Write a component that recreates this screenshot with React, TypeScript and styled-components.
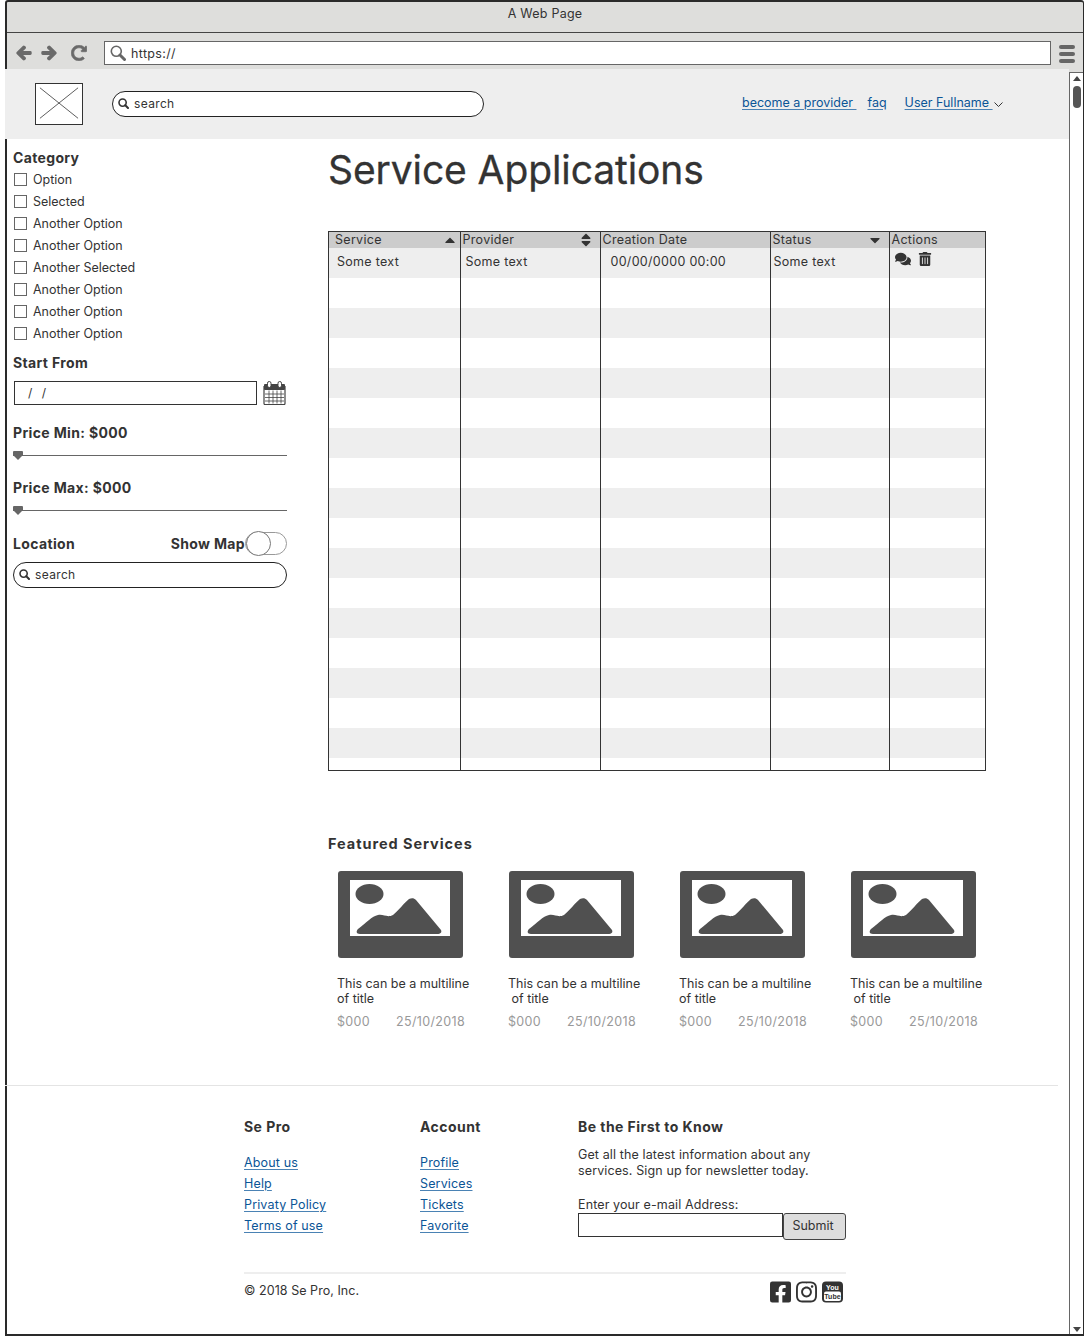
import React from "react";
import styled, { createGlobalStyle } from "styled-components";
import { FaArrowLeft, FaArrowRight, FaRedoAlt, FaComments, FaTrashAlt, FaFacebookSquare, FaInstagram, FaCaretUp, FaCaretDown, FaSort } from "react-icons/fa";

const Global = createGlobalStyle`
  html, body { margin: 0; padding: 0; background: #fff; }
  body { font-family: Inter, "Liberation Sans", sans-serif; font-size: 13px; color: #333; }
  * { box-sizing: border-box; }
`;

const Page = styled.div`
  width: 1085px; height: 1336px; padding-left: 5px; overflow: hidden;
`;
const Window = styled.div`
  width: 1079px; height: 1336px; border: 2px solid #2a2a2a; border-right-width: 1px; border-radius: 3px 3px 0 0;
  background: #dededc; display: flex; flex-direction: column;
`;
const TitleBar = styled.div`
  height: 31px; flex: none; border-bottom: 1.5px solid #444; display: flex; align-items: flex-start; justify-content: center;
  padding-top: 4px; font-size: 12.5px; letter-spacing: 0.25px; color: #333;
`;
const Toolbar = styled.div`
  height: 36px; flex: none; display: flex; align-items: flex-start; padding: 8px 0 0 9px; color: #666;
`;
const NavIcons = styled.div`
  display: flex; gap: 9px; width: 88px; padding-top: 4px; color: #6a6a6a;
  svg { width: 16px; height: 16px; stroke: currentColor; stroke-width: 45px; }
  svg:last-child { margin-left: 5px; stroke-width: 20px; }
`;
const UrlBar = styled.div`
  width: 947px; height: 24px; background: #fff; border: 1px solid #666; display: flex; align-items: center; gap: 5px; padding-left: 5px;
  font-size: 12.5px; color: #333; letter-spacing: 0.35px;
`;
const Burger = styled.div`
  margin: 4px 0 0 8px; width: 16px; display: flex; flex-direction: column; gap: 3px;
  i { display: block; height: 4px; border-radius: 2px; background: #666; }
`;
const Body = styled.div`
  flex: 1; display: flex; min-height: 0;
`;
const Content = styled.div`
  width: 1064px; margin-left: -2px; flex: none; display: flex; flex-direction: column; overflow: hidden;
`;
const Viewport = styled.div`
  flex: 1; background: #fff; display: flex; flex-direction: column; margin-left: 2px; width: 1062px; position: relative;
`;
const Header = styled.header`
  height: 70px; flex: none; background: #eeeeee; display: flex; align-items: flex-start; padding: 14px 0 0 30px; width: 1064px;
`;
const Logo = styled.svg`
  width: 48px; height: 42px; flex: none; background: #fff; border: 1px solid #333; display: block;
`;
const SearchBox = styled.div<{ $w: number }>`
  width: ${(p) => p.$w}px; height: 26px; background: #fff; border: 1.5px solid #222; border-radius: 13px; display: flex; align-items: center; gap: 5px;
  padding-left: 5px; padding-bottom: 1px; font-size: 12px; letter-spacing: 0.35px; color: #333;
`;
const HeaderSearch = styled.div`
  margin: 8px 0 0 29px;
`;
const TopNav = styled.nav`
  margin: 12px 0 0 258px; display: flex; align-items: center; font-size: 12.5px; letter-spacing: 0; white-space: nowrap;
`;
const A = styled.a`
  color: #0b5596; text-decoration: underline; text-decoration-color: #4a82b4; text-underline-offset: 2px; cursor: pointer; white-space: pre;
`;
const NavGap = styled.span<{ $w: number }>`
  width: ${(p) => p.$w}px; display: inline-block;
`;
const Chevron = styled.svg`
  width: 9px; height: 5px; margin: 3px 0 0 1px; display: block;
`;
const Columns = styled.div`
  display: flex; flex: none; height: 946px;
`;
const Sidebar = styled.aside`
  width: 321px; flex: none; padding: 10px 0 0 6px;
`;
const SideHead = styled.h3<{ $mt?: number }>`
  margin: ${(p) => p.$mt ?? 0}px 0 0; font-size: 14px; line-height: 17px; font-weight: 700; letter-spacing: 0.35px; color: #333;
`;
const Options = styled.ul`
  list-style: none; margin: 2px 0 0; padding: 0; display: flex; flex-direction: column;
`;
const Option = styled.li`
  height: 22px; display: flex; align-items: center; gap: 6px; padding-left: 1px; font-size: 12.5px; letter-spacing: 0; color: #333;
`;
const Box = styled.span`
  width: 13px; height: 13px; background: #fff; border: 1px solid #666; flex: none;
`;
const DateRow = styled.div`
  display: flex; align-items: center; gap: 6px; margin: 10px 0 0 1px; width: 273px;
`;
const DateInput = styled.div`
  width: 243px; height: 24px; border: 1px solid #333; font-size: 12px; padding: 3px 0 0 13px; word-spacing: 6px;
`;
const Slider = styled.div`
  position: relative; width: 274px; height: 1px; background: #666; margin-top: 14px;
`;
const Thumb = styled.svg`
  position: absolute; left: 0; top: -4px; width: 10px; height: 9px;
`;
const LocRow = styled.div`
  display: flex; align-items: center; justify-content: space-between; width: 274px; height: 24px; margin-top: 20px;
`;
const MapSwitch = styled.div`
  display: flex; align-items: center;
`;
const Toggle = styled.span`
  width: 42px; height: 23px; border: 1.5px solid #999; border-radius: 12px; display: block; position: relative; background: #fff;
  &::before { content: ""; position: absolute; left: 0; top: -1.5px; width: 23px; height: 23px; border: 1.5px solid #777; border-radius: 50%; background: #fff; }
`;
const SideSearch = styled.div`
  margin-top: 7px;
`;
const Main = styled.main`
  flex: 1; padding-top: 8px;
`;
const Title = styled.h1`
  margin: 0; font-size: 39px; line-height: 46px; font-weight: 400; letter-spacing: -0.1px; color: #333; height: 84px; -webkit-text-stroke: 0.3px #333;
`;
const TableWrap = styled.div`
  width: 658px; height: 540px; border: 1px solid #333; overflow: hidden; background: #fff;
`;
const Table = styled.table`
  border-collapse: collapse; table-layout: fixed; width: 656px; font-size: 12.5px; letter-spacing: 0.3px; color: #333;
`;
const Th = styled.th<{ $w: number }>`
  width: ${(p) => p.$w}px; height: 16px; padding: 0 0 0 1px; background: #cccccc; border-right: 1px solid #333; font-weight: 400; text-align: left; line-height: 16px;
  &:last-child { border-right: 0; }
`;
const ThInner = styled.div<{ $pl?: number; $pr?: number }>`
  display: flex; justify-content: space-between; align-items: center; padding: 0 ${(p) => p.$pr ?? 9}px 0 ${(p) => p.$pl ?? 1}px;
  svg { font-size: 16px; width: 10px; color: #333; }
`;
const Tr = styled.tr<{ $odd: boolean }>`
  background: ${(p) => (p.$odd ? "#eeeeee" : "#ffffff")};
`;
const Td = styled.td<{ $pl?: number }>`
  height: 30px; padding: 0 0 4px ${(p) => p.$pl ?? 4}px; border-right: 1px solid #333; vertical-align: middle;
  &:last-child { border-right: 0; }
`;
const Actions = styled.div`
  display: flex; gap: 7px; align-items: center; margin-top: -5px; color: #333;
  svg { font-size: 16px; }
  svg:last-child { font-size: 14px; }
`;
const Featured = styled.h3`
  margin: 64px 0 0; font-size: 14.5px; line-height: 18px; font-weight: 700; letter-spacing: 0.95px; color: #333;
`;
const Cards = styled.div`
  display: flex; gap: 46px; margin-top: 18px; padding-left: 10px;
`;
const Card = styled.article`
  width: 125px; flex: none;
`;
const Thumbnail = styled.svg`
  width: 125px; height: 87px; display: block;
`;
const CardTitle = styled.p`
  margin: 18px 0 0 -1px; width: 150px; font-size: 12.5px; line-height: 15px; letter-spacing: 0; color: #333; white-space: pre;
`;
const CardMeta = styled.div`
  margin: 8px 0 0 -1px; width: 128px; display: flex; justify-content: space-between; font-size: 12.5px; line-height: 15px; letter-spacing: 0.35px; color: #999;
`;
const Footer = styled.footer`
  border-top: 1px solid #e4e4e4; height: 250px; width: 1053px; margin-left: -2px; padding: 32px 0 0 239px; position: relative;
`;
const FootCols = styled.div`
  display: flex; height: 154px;
`;
const FootCol = styled.div<{ $w: number }>`
  width: ${(p) => p.$w}px; flex: none;
`;
const FootHead = styled.h4`
  margin: 0; font-size: 14px; line-height: 17px; font-weight: 700; letter-spacing: 0.45px; color: #333;
`;
const FootLinks = styled.div`
  display: flex; flex-direction: column; align-items: flex-start; margin-top: 17px; font-size: 12.5px; line-height: 21px; letter-spacing: 0.15px;
`;
const Blurb = styled.p`
  margin: 12px 0 0; font-size: 12.5px; line-height: 16px; letter-spacing: 0.12px; color: #333; white-space: pre;
`;
const EmailLabel = styled.div`
  margin-top: 18px; font-size: 12.5px; line-height: 16px; letter-spacing: 0.12px; color: #333;
`;
const Form = styled.div`
  display: flex; align-items: flex-start;
`;
const EmailInput = styled.div`
  width: 205px; height: 24px; background: #fff; border: 1px solid #333;
`;
const Submit = styled.button`
  width: 63px; height: 27px; background: #dddddd; border: 1px solid #444; border-radius: 3px; padding: 0 3px 2px 0; font: inherit; font-size: 12.5px; letter-spacing: 0; color: #333;
`;
const Legal = styled.div`
  width: 602px; border-top: 2px solid #eeeeee; height: 38px; display: flex; justify-content: space-between; align-items: flex-start; padding-top: 9px; font-size: 12.5px; letter-spacing: 0.05px; color: #333;
`;
const Social = styled.div`
  display: flex; gap: 5px; padding-right: 3px; margin-top: -3px; color: #333;
  svg { width: 21px; height: 24px; display: block; }
`;
const YouTubeText = styled.text`
  font-family: "Liberation Sans", sans-serif; font-weight: 700; font-size: 7px;
`;
const Scrollbar = styled.div`
  width: 14px; flex: none; margin-top: 3px; background: #fff; border-left: 1.5px solid #666; border-top: 1px solid #666; display: flex; flex-direction: column; align-items: center; justify-content: space-between; padding: 3px 0 2px 0;
`;
const ScrollTop = styled.div`
  display: flex; flex-direction: column; align-items: center;
  i { display: block; width: 8px; height: 22px; border-radius: 4px; background: #555; margin-top: 5px; }
`;
const Arrow = styled.span<{ $down?: boolean }>`
  width: 0; height: 0; border-left: 4px solid transparent; border-right: 4px solid transparent;
  ${(p) => (p.$down ? "border-top: 5px solid #444;" : "border-bottom: 5px solid #444;")}
`;

const options = ["Option", "Selected", "Another Option", "Another Option", "Another Selected", "Another Option", "Another Option", "Another Option"];
const cards = ["This can be a multiline\nof title", "This can be a multiline\n of title", "This can be a multiline\nof title", "This can be a multiline\n of title"];

const UrlSearch = () => (
  <svg width="16" height="16" viewBox="0 0 16 16" fill="none" stroke="#666">
    <circle cx="6.300" cy="6.300" r="5" strokeWidth="1.600" />
    <path d="M10 10l4.500 4.500" strokeWidth="3" strokeLinecap="round" />
  </svg>
);

const SmallSearch = () => (
  <svg width="11" height="11" viewBox="0 0 11 11" fill="none" stroke="#333">
    <circle cx="4.600" cy="4.600" r="3.600" strokeWidth="1.600" />
    <path d="M7.300 7.300l2.700 2.700" strokeWidth="2" strokeLinecap="round" />
  </svg>
);

const Calendar = () => (
  <svg width="23" height="24" viewBox="0 0 23 24" fill="none">
    <path d="M1 5.500h21v17a1 1 0 0 1-1 1H2a1 1 0 0 1-1-1z" fill="#fff" stroke="#444" strokeWidth="1.200" />
    <rect x="1" y="3" width="21" height="6" rx="1" fill="#444" />
    <rect x="4.500" y="0.500" width="3.500" height="6" rx="1.700" fill="#fff" stroke="#444" />
    <rect x="15" y="0.500" width="3.500" height="6" rx="1.700" fill="#fff" stroke="#444" />
    <path d="M2 13h19M2 16.500h19M2 20h19M6 9.500v13M10 9.500v13M14 9.500v13M18 9.500v13" stroke="#444" strokeWidth="0.800" />
  </svg>
);

const Placeholder = () => (
  <Thumbnail viewBox="0 0 125 87">
    <rect width="125" height="87" rx="3" fill="#505050" />
    <rect x="12" y="9" width="100" height="56" fill="#fff" />
    <ellipse cx="31.500" cy="23" rx="14" ry="10" fill="#505050" />
    <path d="M20 58c8-6 14-13 20-14 6-1 9 3 15 0 5-4 12-13 16-16 3-1.500 5-1 7 1l25 30c1 2 0 4-4 4H22c-4 0-4-3-2-5z" fill="#505050" />
  </Thumbnail>
);

const SliderBar = () => (
  <Slider>
    <Thumb viewBox="0 0 10 9"><path d="M1 0h8a1 1 0 0 1 1 1v3L5 9 0 4V1a1 1 0 0 1 1-1z" fill="#666" /></Thumb>
  </Slider>
);

export default function App() {
  const rows = Array.from({ length: 18 });
  return (
    <Page>
      <Global />
      <Window>
        <TitleBar>A Web Page</TitleBar>
        <Toolbar>
          <NavIcons><FaArrowLeft /><FaArrowRight /><FaRedoAlt /></NavIcons>
          <UrlBar><UrlSearch />https://</UrlBar>
          <Burger><i /><i /><i /></Burger>
        </Toolbar>
        <Body>
          <Content>
            <Header>
              <Logo viewBox="0 0 48 42"><path d="M4 4l40 32M44 4L4 36" stroke="#555" strokeWidth="1" /></Logo>
              <HeaderSearch><SearchBox $w={372}><SmallSearch />search</SearchBox></HeaderSearch>
              <TopNav>
                <A>become a provider </A><NavGap $w={11} /><A>faq</A><NavGap $w={18} /><A>User Fullname </A>
                <Chevron viewBox="0 0 9 5"><path d="M0.500 0.500L4.500 4.500L8.500 0.500" fill="none" stroke="#333" strokeWidth="1" /></Chevron>
              </TopNav>
            </Header>
            <Viewport>
              <Columns>
                <Sidebar>
                  <SideHead>Category</SideHead>
                  <Options>{options.map((o, i) => <Option key={i}><Box />{o}</Option>)}</Options>
                  <SideHead $mt={10}>Start From</SideHead>
                  <DateRow><DateInput>/ /</DateInput><Calendar /></DateRow>
                  <SideHead $mt={19}>Price Min: $000</SideHead>
                  <SliderBar />
                  <SideHead $mt={23}>Price Max: $000</SideHead>
                  <SliderBar />
                  <LocRow>
                    <SideHead>Location</SideHead>
                    <MapSwitch><SideHead>Show Map</SideHead><Toggle /></MapSwitch>
                  </LocRow>
                  <SideSearch><SearchBox $w={274}><SmallSearch />search</SearchBox></SideSearch>
                </Sidebar>
                <Main>
                  <Title>Service Applications</Title>
                  <TableWrap>
                    <Table>
                      <thead>
                        <tr>
                          <Th $w={131}><ThInner $pl={5} $pr={5}>Service<FaCaretUp /></ThInner></Th>
                          <Th $w={140}><ThInner>Provider<FaSort /></ThInner></Th>
                          <Th $w={170}><ThInner>Creation Date</ThInner></Th>
                          <Th $w={119}><ThInner>Status<FaCaretDown /></ThInner></Th>
                          <Th $w={96}><ThInner>Actions</ThInner></Th>
                        </tr>
                      </thead>
                      <tbody>
                        {rows.map((_, i) => (
                          <Tr key={i} $odd={i % 2 === 0}>
                            <Td $pl={8}>{i === 0 && "Some text"}</Td>
                            <Td $pl={5}>{i === 0 && "Some text"}</Td>
                            <Td $pl={10}>{i === 0 && "00/00/0000 00:00"}</Td>
                            <Td $pl={3}>{i === 0 && "Some text"}</Td>
                            <Td $pl={5}>{i === 0 && <Actions><FaComments /><FaTrashAlt /></Actions>}</Td>
                          </Tr>
                        ))}
                      </tbody>
                    </Table>
                  </TableWrap>
                  <Featured>Featured Services</Featured>
                  <Cards>
                    {cards.map((c, i) => (
                      <Card key={i}>
                        <Placeholder />
                        <CardTitle>{c}</CardTitle>
                        <CardMeta><span>$000</span><span>25/10/2018</span></CardMeta>
                      </Card>
                    ))}
                  </Cards>
                </Main>
              </Columns>
              <Footer>
                <FootCols>
                  <FootCol $w={176}>
                    <FootHead>Se Pro</FootHead>
                    <FootLinks><A>About us</A><A>Help</A><A>Privaty Policy</A><A>Terms of use</A></FootLinks>
                  </FootCol>
                  <FootCol $w={158}>
                    <FootHead>Account</FootHead>
                    <FootLinks><A>Profile</A><A>Services</A><A>Tickets</A><A>Favorite</A></FootLinks>
                  </FootCol>
                  <FootCol $w={268}>
                    <FootHead>Be the First to Know</FootHead>
                    <Blurb>{"Get all the latest information about any\nservices. Sign up for newsletter today."}</Blurb>
                    <EmailLabel>Enter your e-mail Address:</EmailLabel>
                    <Form><EmailInput /><Submit>Submit</Submit></Form>
                  </FootCol>
                </FootCols>
                <Legal>
                  <span>© 2018 Se Pro, Inc.</span>
                  <Social>
                    <FaFacebookSquare />
                    <FaInstagram />
                    <svg viewBox="0 -1.500 21 24">
                      <rect width="21" height="21" rx="4" fill="#333" />
                      <rect x="2" y="10" width="17" height="9.500" rx="2" fill="#fff" />
                      <YouTubeText x="10.500" y="8" textAnchor="middle" fill="#fff">You</YouTubeText>
                      <YouTubeText x="10.500" y="17.500" textAnchor="middle" fill="#333">Tube</YouTubeText>
                    </svg>
                  </Social>
                </Legal>
              </Footer>
            </Viewport>
          </Content>
          <Scrollbar>
            <ScrollTop><Arrow /><i /></ScrollTop>
            <Arrow $down />
          </Scrollbar>
        </Body>
      </Window>
    </Page>
  );
}
